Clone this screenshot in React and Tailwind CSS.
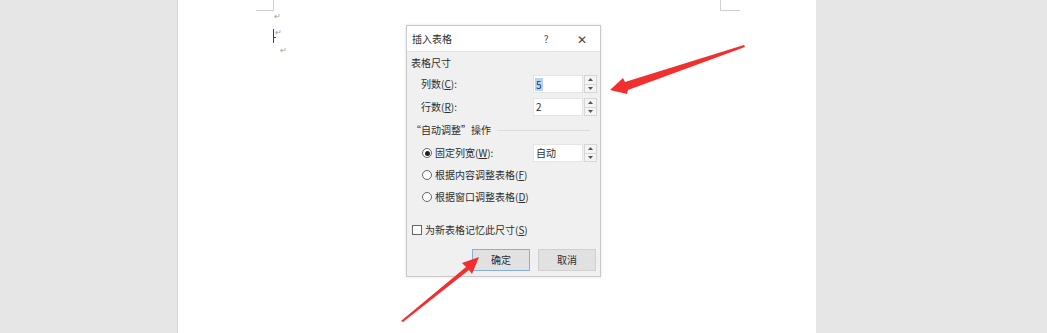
import React from "react";

const font = { fontFamily: '"Noto Sans CJK SC", "Noto Sans", sans-serif' };

const Spinner = () => (
  <div className="flex flex-col w-[13px] h-[18px] ml-[1px] border border-[#d6d6d6] bg-[#f4f4f4]">
    <div className="flex-1 flex items-center justify-center border-b border-[#d6d6d6]">
      <svg width="5" height="3" viewBox="0 0 5 3"><path d="M0 3 L2.5 0 L5 3Z" fill="#555" /></svg>
    </div>
    <div className="flex-1 flex items-center justify-center">
      <svg width="5" height="3" viewBox="0 0 5 3"><path d="M0 0 L2.5 3 L5 0Z" fill="#555" /></svg>
    </div>
  </div>
);

// label text with an underlined access key, e.g. 列数(C):
const Label = ({ text, k, tail = "" }) => (
  <span>
    {text}(<span className="underline underline-offset-1">{k}</span>){tail}
  </span>
);

const NumField = ({ text, k, value, selected, top }) => (
  <div className={`flex items-center ${top}`}>
    <span className="w-[122px] pl-[10px]">
      <Label text={text} k={k} tail=":" />
    </span>
    <div className="w-[50px] h-[18px] bg-white border border-[#e4e4e4] flex items-center pl-[1px]">
      {selected ? (
        <span className="bg-[#b9d4f0] text-[#1a3c6e] px-[1px] leading-[13px]">{value}</span>
      ) : (
        <span className="px-[1px]">{value}</span>
      )}
    </div>
    <Spinner />
  </div>
);

const Radio = ({ checked }) => (
  <span className="w-[10px] h-[10px] rounded-full border border-[#666] bg-white flex items-center justify-center mr-[3px]">
    {checked && <span className="w-[5px] h-[5px] rounded-full bg-[#222]" />}
  </span>
);

export default function App() {
  return (
    <div className="relative w-[1047px] h-[333px] overflow-hidden flex bg-[#e6e6e6]" style={font}>
      <div className="w-[178px] shrink-0 border-r border-[#d8d8d8]" />
      <div className="relative w-[638px] shrink-0 bg-white pt-[25px] pl-[228px]">
        {/* page corner marks */}
        <div className="absolute left-[78px] top-0 w-[18px] h-[11px] border-r border-b border-[#cfcfcf]" />
        <div className="absolute left-[542px] top-0 w-[20px] h-[11px] border-l border-b border-[#cfcfcf]" />
        <span className="absolute left-[96px] top-[12px] text-[8px] text-[#9a9a9a] leading-none">↵</span>
        <div className="absolute left-[95px] top-[29px] w-[1px] h-[14px] bg-[#444]" />
        <div className="absolute left-[95px] top-[37px] w-[3px] h-[1px] bg-[#444]" />
        <span className="absolute left-[97px] top-[28px] text-[8px] text-[#9a9a9a] leading-none">↵</span>
        <span className="absolute left-[102px] top-[46px] text-[8px] text-[#9a9a9a] leading-none">↵</span>

        {/* dialog */}
        <div className="w-[195px] h-[252px] border border-[#c9c9c9] bg-[#f0f0f0] text-[10px] text-[#2e2e2e] leading-[14px] shadow-[0_0_3px_rgba(0,0,0,0.12)]">
          <div className="h-[26px] bg-white flex items-center pl-[5px] border-b border-[#e2e2e2]">
            <span className="flex-1">插入表格</span>
            <span className="w-[36px] text-center text-[#444]">?</span>
            <span className="w-[36px] text-center text-[12px] text-[#444]">✕</span>
          </div>
          <div className="pl-[4px]">
            <div className="mt-[3px] h-[16px] flex items-center">表格尺寸</div>
            <NumField text="列数" k="C" value="5" selected top="mt-[4px]" />
            <NumField text="行数" k="R" value="2" top="mt-[5px]" />
            <div className="mt-[6px] h-[16px] flex items-center pr-[10px]">
              <span>“自动调整”操作</span>
              <span className="flex-1 h-[1px] bg-[#dcdcdc] ml-[6px]" />
            </div>
            <div className="flex items-center mt-[6px]">
              <span className="w-[122px] pl-[11px] flex items-center">
                <Radio checked />
                <Label text="固定列宽" k="W" tail=":" />
              </span>
              <div className="w-[50px] h-[18px] bg-white border border-[#e4e4e4] flex items-center pl-[2px]">自动</div>
              <Spinner />
            </div>
            <div className="flex items-center mt-[4px] h-[18px] pl-[11px]">
              <Radio />
              <Label text="根据内容调整表格" k="F" />
            </div>
            <div className="flex items-center mt-[4px] h-[18px] pl-[11px]">
              <Radio />
              <Label text="根据窗口调整表格" k="D" />
            </div>
            <div className="flex items-center mt-[15px] h-[18px] pl-[1px]">
              <span className="w-[10px] h-[10px] border border-[#666] bg-white mr-[3px]" />
              <Label text="为新表格记忆此尺寸" k="S" />
            </div>
            <div className="flex mt-[10px] pl-[61px] gap-[8px]">
              <div className="w-[58px] h-[22px] bg-[#e1e1e1] border border-[#86aee0] flex items-center justify-center">确定</div>
              <div className="w-[58px] h-[22px] bg-[#e1e1e1] border border-[#d0d0d0] flex items-center justify-center">取消</div>
            </div>
          </div>
        </div>
      </div>
      <div className="flex-1" />

      {/* annotation arrows */}
      <svg className="absolute left-0 top-0 pointer-events-none" width="1047" height="333" viewBox="0 0 1047 333">
        <polygon points="610,90 623,78 625,82 744,45 745,47 628,90 627,94" fill="#f0302e" />
        <polygon points="479,257 462,263 466,267 401,321 403,322 469,270 472,274" fill="#f0302e" />
      </svg>
    </div>
  );
}
